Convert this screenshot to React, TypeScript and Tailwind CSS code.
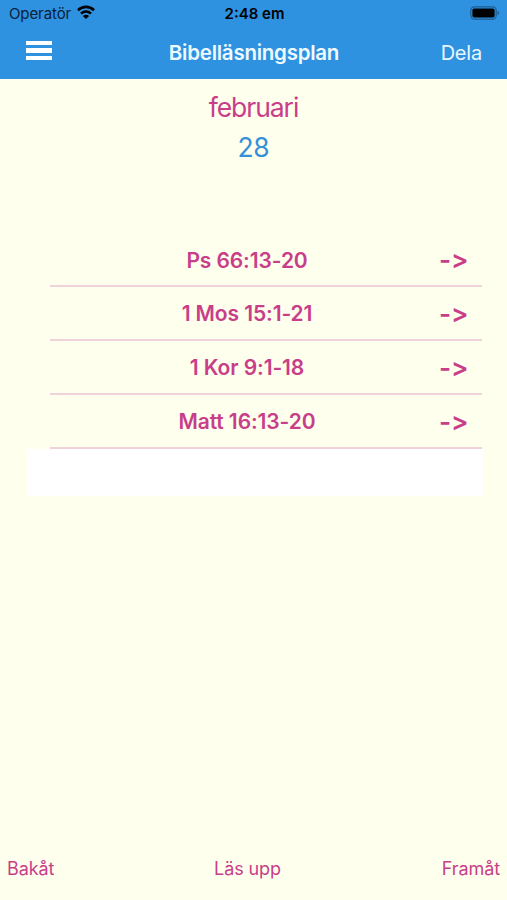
import React from 'react';

interface Reading {
  id: number;
  passage: string;
}

const readings: Reading[] = [
  { id: 1, passage: 'Ps 66:13-20' },
  { id: 2, passage: '1 Mos 15:1-21' },
  { id: 3, passage: '1 Kor 9:1-18' },
  { id: 4, passage: 'Matt 16:13-20' },
];

const StatusBar: React.FC = () => (
  <div className="grid h-[26px] grid-cols-3 items-center pl-[9px] pr-[7px] text-[#0a2138]">
    <div className="flex items-center gap-[6px]">
      <span className="pt-px text-[15px] leading-none tracking-[-0.1px]">Operatör</span>
      <svg className="-mt-0.5 h-[14px] w-[18px]" viewBox="0 0 18 14" fill="none" stroke="#000" strokeWidth="2.6">
        <path d="M1 5.2C5.6 0.8 12.4 0.8 17 5.2" />
        <path d="M4 8.6C6.9 5.9 11.1 5.9 14 8.6" />
        <path d="M9 14L5.9 10.9C7.7 9.3 10.3 9.3 12.1 10.9Z" fill="#000" stroke="none" />
      </svg>
    </div>
    <span className="pt-px text-center text-[15px] font-semibold leading-none text-black">2:48 em</span>
    <svg className="h-[14px] w-[30px] justify-self-end" viewBox="0 0 30 14">
      <rect x="0.8" y="0.8" width="25.4" height="12.4" rx="3.6" fill="none" stroke="#1d5c91" strokeWidth="1.2" />
      <rect x="2.4" y="2.4" width="22.2" height="9.2" rx="1.8" fill="#000" />
      <path d="M27.6 4.8C29.6 5.6 29.6 8.4 27.6 9.2Z" fill="#1d5c91" />
    </svg>
  </div>
);

const Header: React.FC = () => (
  <header className="h-[79px] bg-[#2e92e0]">
    <StatusBar />
    <div className="grid h-[53px] grid-cols-[1fr_auto_1fr] items-center pl-[26px] pr-[25px] text-white">
      <button type="button" aria-label="Meny" className="-mt-1 flex w-[26px] flex-col gap-[3px]">
        <span className="h-[4.5px] bg-white" />
        <span className="h-[4.5px] bg-white" />
        <span className="h-[4.5px] bg-white" />
      </button>
      <h1 className="pt-0.5 text-[20.5px] font-semibold tracking-[-0.25px] text-[#effaff]">Bibelläsningsplan</h1>
      <button type="button" className="justify-self-end text-[20px] tracking-[-0.2px] text-[#e8f7ff]">
        Dela
      </button>
    </div>
  </header>
);

const ReadingRow: React.FC<{ reading: Reading }> = ({ reading }) => (
  <li className="ml-[50px] mr-[25px] flex h-[53.75px] items-center border-b-2 border-[#f0d3d8] font-semibold">
    <span className="w-[394px] shrink-0 pt-0.5 text-center text-[21px] tracking-[-0.1px]">{reading.passage}</span>
    {/* ligatures off, otherwise Inter joins the two characters into one arrow */}
    <span className="-ml-[5px] mt-0.5 text-[26px] leading-none whitespace-nowrap [font-feature-settings:'calt'_0]">{'->'}</span>
  </li>
);

const App: React.FC = () => {
  return (
    <div className="flex h-[900px] w-full flex-col bg-[#ffffee] font-['Inter',sans-serif] text-[#c83e89]">
      <Header />
      <main className="flex-1">
        <div className="pt-2 text-center text-[26.5px] leading-10">
          <p className="tracking-[-1.05px]">februari</p>
          <p className="tracking-[-0.4px] text-[#3590d8]">28</p>
        </div>
        <ul className="pt-[66.5px]">
          {readings.map((reading) => (
            <ReadingRow key={reading.id} reading={reading} />
          ))}
        </ul>
        <div className="ml-[27px] mr-[24px] h-[47px] bg-white" />
      </main>
      <footer className="grid h-[62px] grid-cols-3 items-center px-[7px] pb-0.5 text-[18px] tracking-[-0.1px]">
        <button type="button" className="justify-self-start">Bakåt</button>
        <button type="button" className="mr-3">Läs upp</button>
        <button type="button" className="justify-self-end">Framåt</button>
      </footer>
    </div>
  );
};

export default App;
